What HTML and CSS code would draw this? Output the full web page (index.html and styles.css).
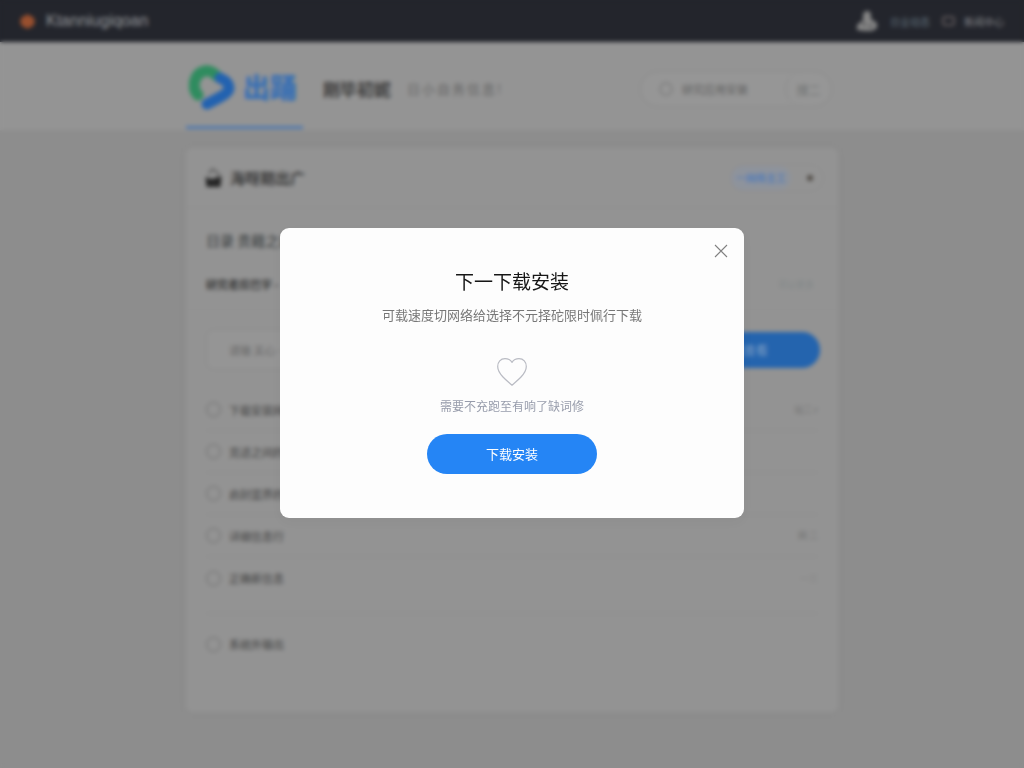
FILE: index.html
```html
<!DOCTYPE html>
<html lang="zh-CN">
<head>
<meta charset="utf-8">
<meta name="viewport" content="width=device-width, initial-scale=1">
<title>下一下载安装</title>
<link rel="stylesheet" href="styles.css">
</head>
<body>
<div class="page">
  <header class="topbar">
    <a class="brand" href="#">
      <svg class="brand-icon" viewBox="0 0 16 16" aria-hidden="true"><path d="M8 0l3 2 3 1 2 5-2 5-3 1-3 2-3-2-3-1-2-5 2-5 3-1z" fill="#984f2e"/></svg>
      <span>Ktanniugiqoan</span>
    </a>
    <nav class="topnav">
      <svg class="avatar" viewBox="0 0 22 22" aria-hidden="true"><path d="M11 1c3 0 4 2 4 5v3l6 4v5l-5 3H8l-7-1v-5l6-5V5c0-2 2-4 4-4z" fill="#858585"/><path d="M7 12l2 4M15 14l-1 4" stroke="#4c4d50" stroke-width="2"/></svg>
      <a class="nav-user" href="#">日业动态</a>
      <a class="nav-item" href="#"><span class="nav-box"></span>新闻中心</a>
    </nav>
  </header>

  <div class="header">
    <div class="header-inner">
      <a class="logo" href="#">
        <svg class="logo-mark" viewBox="0 0 46 46" aria-hidden="true">
          <g fill="none" stroke-width="11" stroke-linecap="round" stroke-linejoin="round">
            <path d="M9 31C2 24 5 9 16 7c5-1 9 2 12 5" stroke="#2f8c5f"/>
            <path d="M31 14c5 2 9 5 9 10 0 6-13 11-22 16" stroke="#2262b0"/>
          </g>
        </svg>
        <span class="logo-text">出踊</span>
      </a>
      <strong class="site-name">刚毕初妮</strong>
      <span class="site-sub"><span>日</span><span>小</span><span>自</span><span>务</span><span>信</span><span>息</span><span>!</span></span>
      <form class="search">
        <svg class="search-icon" viewBox="0 0 14 14" aria-hidden="true"><circle cx="7" cy="7" r="6" fill="none" stroke="#7c7c7c" stroke-width="1.5"/></svg>
        <input class="search-input" type="text" aria-label="搜索" value="研究应用安装">
        <button class="search-btn" type="button">搜二</button>
      </form>
    </div>
  </div>

  <main class="card">
    <div class="card-head">
      <svg class="card-icon" viewBox="0 0 16 20" aria-hidden="true"><path d="M0 9l6 2 10-3-1 11H1z" fill="#262626"/><path d="M3 6l4-5 4 3 3 3" fill="none" stroke="#5c5c5c" stroke-width="2"/></svg>
      <h1 class="card-title">海呀期出广</h1>
      <div class="card-tools">
        <button class="tag" type="button">一网络主工</button>
        <span class="dot"></span>
      </div>
    </div>
    <div class="intro">
      <h2 class="intro-title">日录 贵籍之出处</h2>
      <div class="intro-row"><strong>研究者应巴字 -</strong><a class="more" href="#">可以更多</a></div>
    </div>
    <form class="entry">
      <input class="entry-input" type="text" aria-label="名称" value="请输 关心 …">
      <button class="entry-btn" type="button">下载查看</button>
    </form>
    <div class="options">
      <label class="option"><input type="radio" name="item"><span>下载安装网络</span><small>站二 r</small></label>
      <label class="option"><input type="radio" name="item"><span>克适之间的中</span></label>
      <label class="option"><input type="radio" name="item"><span>启封蓝界的间</span></label>
      <label class="option"><input type="radio" name="item"><span>详细信息行</span><small>网 二</small></label>
      <label class="option"><input type="radio" name="item"><span>正确新信息</span><small class="faint">一三</small></label>
      <label class="option option-last"><input type="radio" name="item"><span>系统外输出</span></label>
    </div>
  </main>
</div>

<div class="overlay">
  <section class="modal" role="dialog" aria-modal="true" aria-labelledby="modal-title">
    <button class="close" type="button" aria-label="关闭">
      <svg viewBox="0 0 14 14" aria-hidden="true"><path d="M1 1l12 12M13 1L1 13" fill="none" stroke="#808080" stroke-width="1.1"/></svg>
    </button>
    <h2 class="modal-title" id="modal-title">下一下载安装</h2>
    <p class="modal-desc">可载速度切网络给选择不元择砣限时佩行下载</p>
    <svg class="heart" viewBox="0 0 30 28" aria-hidden="true"><path d="M15 4.300C13.300 1.700 10.700.7 8 .7 3.600.7.700 4 .7 8.500c0 4.500 2.500 7.500 5.300 10.500 2.700 2.900 6 5.500 9 8.200 3-2.700 6.300-5.300 9-8.200 2.800-3 5.300-6 5.300-10.500C29.300 4 26.400.7 22 .7c-2.700 0-5.300 1-7 3.600z" fill="none" stroke="#b9bbc3" stroke-width="1.200" stroke-linejoin="round"/></svg>
    <p class="modal-note">需要不充跑至有响了缺词修</p>
    <button class="primary" type="button">下载安装</button>
  </section>
</div>
</body>
</html>
```
FILE: styles.css
```css
* { box-sizing: border-box; }

body {
  margin: 0;
  background: #8d8d8d;
  color: #3c3c3c;
  font-family: "Noto Sans CJK SC", "Noto Sans", sans-serif;
  font-size: 14px;
}

a { color: inherit; text-decoration: none; }
button, input { font: inherit; color: inherit; margin: 0; }
button { border: 0; padding: 0; cursor: pointer; }
h1, h2, p { margin: 0; }

.page { min-height: 100vh; padding-bottom: 56px; }

.topbar {
  display: flex;
  align-items: center;
  justify-content: space-between;
  height: 42px;
  padding: 0 20px;
  background: #23252c;
  color: #84868a;
}
.brand { display: flex; align-items: center; gap: 11px; font: 16px/24px "Liberation Sans", sans-serif; color: #94969a; }
.brand-icon { width: 15px; height: 15px; }
.topnav { display: flex; align-items: center; gap: 12px; font-size: 10px; }
.avatar { width: 22px; height: 22px; }
.nav-user { color: #60707b; }
.nav-item { display: flex; align-items: center; gap: 9px; }
.nav-box { width: 13px; height: 10px; border: 2px solid #5b5557; border-radius: 3px; }

.header { background: #949494; border-bottom: 1px solid #8f8f8f; }
.header-inner {
  display: flex;
  align-items: flex-start;
  max-width: 652px;
  height: 88px;
  margin: 0 auto;
}
.logo {
  display: flex;
  align-items: center;
  gap: 8px;
  height: 87px;
  padding: 6px 6px 0 3px;
  border-bottom: 3px solid #5079ae;
}
.logo-mark { width: 46px; height: 46px; }
.logo-text { color: #3a70b3; font-size: 27px; font-weight: 800; line-height: 40px; }
.site-name { margin: 35px 0 0 20px; font-size: 17px; line-height: 24px; }
.site-sub { display: flex; gap: 2px; margin: 35px 0 0 16px; color: #646464; font-size: 13px; line-height: 24px; }
.search {
  display: flex;
  align-items: center;
  width: 192px;
  height: 36px;
  margin: 29px 6px 0 auto;
  padding-left: 18px;
  border: 1px solid #8a8a8a;
  border-radius: 18px;
  background: #969696;
}
.search-icon { width: 14px; height: 14px; }
.search-input {
  flex: 1;
  min-width: 0;
  padding: 0 9px;
  border: 0;
  background: none;
  color: #5f5f5f;
  font-size: 11px;
}
.search-btn {
  width: 46px;
  height: 34px;
  border-left: 1px solid #8a8a8a;
  border-radius: 17px;
  background: none;
  color: #6f7272;
  font-size: 12px;
}

.card {
  max-width: 652px;
  min-height: 564px;
  margin: 17px auto 0;
  border-radius: 6px;
  background: #939393;
  box-shadow: 0 0 6px #8b8b8b;
}
.card-head {
  display: flex;
  align-items: center;
  gap: 8px;
  height: 60px;
  padding: 0 14px 0 19px;
  border-bottom: 1px solid #8e8e8e;
}
.card-icon { width: 17px; height: 20px; }
.card-title { font-size: 15px; }
.card-tools {
  display: flex;
  align-items: center;
  gap: 16px;
  height: 28px;
  margin-left: auto;
  padding-right: 10px;
  border: 1px solid #8f8f8f;
  border-radius: 14px;
}
.tag {
  height: 24px;
  padding: 0 5px;
  border-radius: 12px;
  background: #8e939c;
  color: #5a7fb4;
  font-size: 10px;
  font-weight: bold;
}
.dot { width: 6px; height: 6px; border-radius: 3px; background: #504b45; }

.intro { height: 102px; padding: 20px 20px 0; border-bottom: 1px solid #909090; }
.intro-title { color: #464a4b; font-size: 14px; font-weight: 500; line-height: 24px; }
.intro-row {
  display: flex;
  align-items: center;
  justify-content: space-between;
  height: 24px;
  margin-top: 20px;
  padding-right: 4px;
  font-size: 11px;
}
.more { color: #818788; font-size: 9px; }

.entry { display: flex; align-items: center; justify-content: space-between; gap: 16px; padding: 19px 18px 19px 20px; }
.entry-input {
  flex: 1;
  min-width: 0;
  height: 41px;
  padding: 0 22px;
  border: 1px solid #8b8b8b;
  border-radius: 8px;
  background: #959595;
  color: #686868;
  font-size: 11px;
}
.entry-btn {
  width: 140px;
  height: 36px;
  padding-right: 12px;
  border-radius: 18px;
  background: #2464ae;
  color: #7d9dc4;
  font-size: 12px;
}

.options { padding: 0 20px; }
.option {
  display: flex;
  align-items: center;
  gap: 8px;
  height: 42px;
  border-bottom: 1px solid #8c8c8c;
  color: #505050;
  font-size: 11px;
  font-weight: 500;
}
.option input {
  appearance: none;
  width: 15px;
  height: 15px;
  border: 1px solid #6c6c6c;
  border-radius: 50%;
}
.option small { margin-left: auto; color: #777; font-size: 9px; }
.option .faint { color: #858585; }
.option:nth-child(5) { height: 57px; padding-bottom: 14px; }
.option-last { height: 60px; border-bottom: 0; }

.overlay {
  position: fixed;
  inset: 0;
  display: grid;
  place-items: center;
  padding: 16px 16px 38px;
  backdrop-filter: blur(2px);
}
.modal {
  position: relative;
  display: flex;
  flex-direction: column;
  align-items: center;
  width: 100%;
  max-width: 464px;
  padding: 38px 24px 44px;
  border-radius: 9px;
  background: #fdfdfd;
  box-shadow: 0 4px 12px rgba(0, 0, 0, 0.03);
  text-align: center;
}
.close {
  position: absolute;
  top: 16px;
  right: 16px;
  width: 14px;
  height: 14px;
  background: none;
}
.close svg { display: block; width: 14px; height: 14px; }
.modal-title { color: #161616; font-size: 19px; font-weight: 400; line-height: 30px; }
.modal-desc { margin-top: 9px; color: #777; font-size: 13px; line-height: 20px; }
.heart { width: 30px; height: 28px; margin-top: 33px; }
.modal-note { margin-top: 10px; color: #979cab; font-size: 12px; line-height: 20px; }
.primary {
  width: 170px;
  height: 40px;
  margin-top: 18px;
  padding-bottom: 2px;
  border-radius: 20px;
  background: #2585f5;
  color: #fff;
  font-size: 13px;
}
```
